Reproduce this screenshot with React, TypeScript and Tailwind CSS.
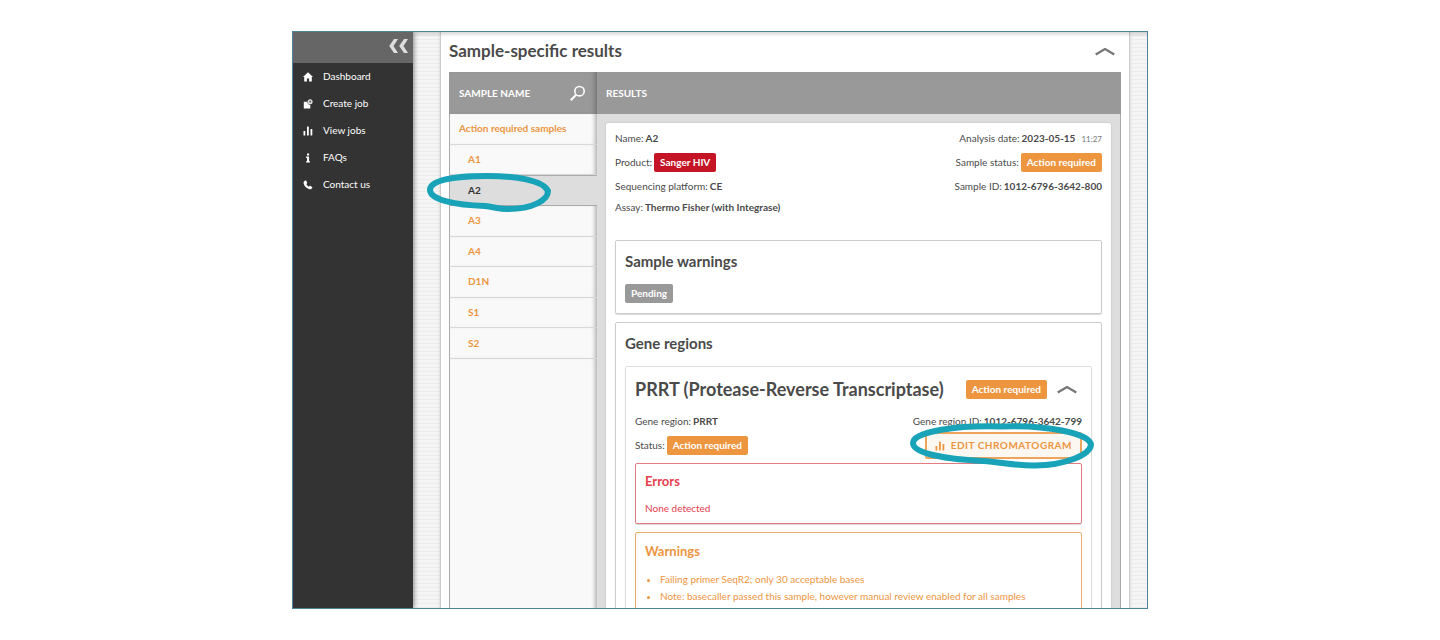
import React from 'react';

const navItems = [
  { label: 'Dashboard', icon: 'home' },
  { label: 'Create job', icon: 'create' },
  { label: 'View jobs', icon: 'bars' },
  { label: 'FAQs', icon: 'info' },
  { label: 'Contact us', icon: 'phone' },
];

const samples = ['A1', 'A2', 'A3', 'A4', 'D1N', 'S1', 'S2'];
const selected = 'A2';

const Bars: React.FC = () => (
  <svg width="10" height="10" viewBox="0 0 10 10" fill="currentColor" aria-hidden="true">
    <rect x="0.5" y="5" width="1.8" height="4.5" rx="0.5" />
    <rect x="4" y="0.5" width="1.8" height="9" rx="0.5" />
    <rect x="7.5" y="3" width="1.8" height="6.5" rx="0.5" />
  </svg>
);

const NavIcon: React.FC<{ name: string }> = ({ name }) => {
  if (name === 'bars') return <Bars />;
  return (
    <svg width="10" height="10" viewBox="0 0 10 10" fill="currentColor" aria-hidden="true">
      {name === 'home' && <path d="M5 0.300 0 5h1.200v4.500h2.700V6.500h2.200v3h2.700V5H10z" />}
      {name === 'create' && (
        <>
          <path d="M0.800 2.800h3.600a2.600 2.600 0 0 0 2.900 3v3.700H0.800z" />
          <path d="M7.100 0.200a2.500 2.500 0 1 0 0 5 2.500 2.500 0 0 0 0-5zm-.3 1.300h.6v.9h.9v.6h-.9v.9h-.6V3h-.9v-.6h.9z" fillRule="evenodd" opacity="0.85" />
        </>
      )}
      {name === 'info' && <path d="M4 0.500h2.100v2H4zM3.100 3.600h3v4.600h.9v1.300H3.100V8.200H4V4.900h-.9z" />}
      {name === 'phone' && (
        <path d="M2.200 0.600c.5-.3.9-.1 1.100.3l.8 1.500c.2.4.1.7-.2 1l-.6.5c.5 1.200 1.400 2.200 2.700 2.800l.6-.6c.3-.3.6-.3 1-.1l1.400.9c.4.3.5.7.2 1.100-.6 1-1.500 1.500-2.700 1.200C3.400 8.400 1.100 6 0.600 3.300c-.2-1.200.4-2.100 1.600-2.700z" />
      )}
    </svg>
  );
};

const Chevron: React.FC = () => (
  <svg width="20" height="9" viewBox="0 0 20 9" fill="none" stroke="#777" strokeWidth="2.2" aria-hidden="true">
    <path d="M0.700 7.500 10 2l9.300 5.500" strokeLinejoin="round" />
  </svg>
);

const Badge: React.FC<{ className: string; children: React.ReactNode }> = ({ className, children }) => (
  <span className={`inline-flex h-[19px] items-center rounded-[2px] px-[6px] font-bold text-white ${className}`}>
    {children}
  </span>
);

const Row: React.FC<{ label: string; tall?: boolean; children: React.ReactNode }> = ({ label, tall, children }) => (
  <div className={`flex items-center gap-[2px] ${tall ? 'h-[27px]' : 'h-[21px]'}`}>
    <span>{label}</span>
    {children}
  </div>
);

const box = 'rounded-[2px] border px-[9px] shadow-[0_1px_1px_rgba(0,0,0,0.15)]';

const App: React.FC = () => {
  return (
    <div className="h-screen bg-white py-[31px] font-['Lato',sans-serif] text-[10px] text-[#4a4a4a]">
      <div className="mx-auto flex h-full max-w-[856px] overflow-hidden border border-[#4f8599]">
        {/* Sidebar */}
        <aside className="z-10 w-[120px] shrink-0 bg-[#333] text-white shadow-[1px_0_5px_rgba(0,0,0,0.45)]">
          <div className="flex h-[31px] items-center justify-end bg-[#666] pr-1 pb-[3px]">
            <button type="button" aria-label="Collapse menu">
              <svg width="21" height="14" viewBox="0 0 21 14" fill="#ddd" aria-hidden="true">
                <path d="M6 0h4L5.500 7l4.500 7H6L1.200 7zM16 0h4l-4.500 7 4.500 7h-4l-4.800-7z" />
              </svg>
            </button>
          </div>
          <nav>
            {navItems.map((item) => (
              <a key={item.label} href="#" className="flex h-[27px] items-center gap-[10px] pl-[10px]">
                <NavIcon name={item.icon} />
                {item.label}
              </a>
            ))}
          </nav>
        </aside>

        {/* Main area on the ruled background */}
        <main className="relative flex min-w-0 flex-1 bg-[repeating-linear-gradient(to_bottom,#f5f5f5_0px,#f5f5f5_3px,#ececec_3px,#ececec_4px)] pr-[17px] pl-[27px]">
          <section className="min-w-0 flex-1 self-start border-x border-[#ccc] bg-white px-2 shadow-[0_0_3px_rgba(0,0,0,0.15)]">
            <header className="flex h-10 items-center justify-between pr-[6px] pb-[2px]">
              <h1 className="text-[17px] font-bold">Sample-specific results</h1>
              <button type="button" aria-label="Collapse sample results">
                <Chevron />
              </button>
            </header>

            <div className="flex">
              {/* Sample list */}
              <div className="flex w-[148px] shrink-0 flex-col bg-[#ddd]">
                <div className="flex h-[42px] items-center justify-between bg-[#999] pr-[11px] pl-[10px] font-bold text-white shadow-[inset_-5px_0_5px_-3px_rgba(0,0,0,0.25)]">
                  SAMPLE NAME
                  <button type="button" aria-label="Search samples">
                    <svg width="17" height="17" viewBox="0 0 17 17" fill="none" stroke="#fff" strokeWidth="1.6" aria-hidden="true">
                      <circle cx="10.500" cy="6.200" r="4.700" />
                      <path d="m7.200 9.800-5.400 5.400" strokeWidth="2" />
                    </svg>
                  </button>
                </div>
                <ul className="grid h-[245px] auto-rows-fr font-bold text-[#ec953f]">
                  <li className="flex items-center border-b border-l border-b-[#d8d8d8] border-l-[#aaa] bg-[#f9f9f9] pl-[9px] shadow-[inset_-5px_0_4px_-3px_rgba(0,0,0,0.3)]">
                    Action required samples
                  </li>
                  {samples.map((name) => (
                    <li
                      key={name}
                      className={
                        name === selected
                          ? 'relative flex border-y border-l border-[#aaa] bg-[#ddd] text-[#333]'
                          : 'flex border-b border-l border-b-[#d8d8d8] border-l-[#aaa] bg-[#f9f9f9] shadow-[inset_-5px_0_4px_-3px_rgba(0,0,0,0.3)]'
                      }
                    >
                      <button type="button" className="flex-1 pl-[18px] text-left font-bold">
                        {name}
                      </button>
                      {name === selected && (
                        <svg className="pointer-events-none absolute -top-[5px] -left-[25px] z-20" width="130" height="42" viewBox="0 0 130 42" fill="none" stroke="#18a3b8" strokeWidth="6" aria-hidden="true">
                          <path d="M62 5C25 5 5 10 5 19c0 10 26 15 55 16 9 1 14 3 23 3 25 0 40-9 40-18C118 9 90 5 62 5z" />
                        </svg>
                      )}
                    </li>
                  ))}
                </ul>
                <div className="flex-1 border-l border-[#aaa] bg-[#f9f9f9] shadow-[inset_-5px_0_4px_-3px_rgba(0,0,0,0.3)]" />
              </div>

              {/* Results */}
              <div className="min-w-0 flex-1 border-r border-[#aaa] bg-[#ddd]">
                <h2 className="-mr-px flex h-[42px] items-center bg-[#999] pl-[9px] font-bold text-white">RESULTS</h2>
                <div className="px-[9px] pt-[9px]">
                  <article className="rounded-t-[2px] bg-white px-[9px] pt-[5px] pb-3 shadow-[0_0_2px_rgba(0,0,0,0.2)]">
                    <div className="flex justify-between">
                      <div>
                        <Row label="Name:"><b>A2</b></Row>
                        <Row label="Product:" tall><Badge className="bg-[#c41425]">Sanger HIV</Badge></Row>
                        <Row label="Sequencing platform:"><b>CE</b></Row>
                        <Row label="Assay:"><b>Thermo Fisher (with Integrase)</b></Row>
                      </div>
                      <div className="flex flex-col items-end">
                        <Row label="Analysis date:">
                          <b>2023-05-15</b>
                          <time className="pl-1 text-[8px] text-[#777]">11:27</time>
                        </Row>
                        <Row label="Sample status:" tall><Badge className="bg-[#ed953f]">Action required</Badge></Row>
                        <Row label="Sample ID:"><b>1012-6796-3642-800</b></Row>
                      </div>
                    </div>

                    <section className={`mt-[22px] border-[#ccc] pb-[10px] ${box}`}>
                      <h3 className="flex h-[43px] items-center pb-[2px] text-[15px] font-bold">Sample warnings</h3>
                      <Badge className="bg-[#999]">Pending</Badge>
                    </section>

                    <section className={`mt-2 border-[#ccc] pb-[9px] ${box}`}>
                      <h3 className="flex h-[43px] items-center pb-[2px] text-[15px] font-bold">Gene regions</h3>
                      <div className={`border-[#ddd] pb-[9px] ${box}`}>
                        <header className="flex h-11 items-center gap-[10px] pr-[5px]">
                          <h4 className="flex-1 text-[18px] font-bold">PRRT (Protease-Reverse Transcriptase)</h4>
                          <Badge className="bg-[#ed953f]">Action required</Badge>
                          <button type="button" aria-label="Collapse gene region">
                            <Chevron />
                          </button>
                        </header>
                        <div className="mb-1 flex justify-between">
                          <div>
                            <Row label="Gene region:"><b>PRRT</b></Row>
                            <Row label="Status:" tall><Badge className="bg-[#ed953f]">Action required</Badge></Row>
                          </div>
                          <div className="flex flex-col items-end">
                            <Row label="Gene region ID:"><b>1012-6796-3642-799</b></Row>
                            <div className="relative">
                              <button type="button" className="flex h-[27px] items-center gap-[6px] rounded-[2px] border-2 border-[#eda45c] bg-[#fdf7f1] px-2 font-bold tracking-wider text-[#ec953f]">
                                <Bars />
                                EDIT CHROMATOGRAM
                              </button>
                              <svg className="pointer-events-none absolute -top-[11px] -right-[13px]" width="188" height="50" viewBox="0 0 188 50" fill="none" stroke="#18a3b8" strokeWidth="6" aria-hidden="true">
                                <path d="M95 5.500C52 4 6 10 6 22c0 10 30 16 70 18 18 1 34 5 52 4.500C158 44 184 34 184 23 180 12 140 4 95 5.500z" />
                              </svg>
                            </div>
                          </div>
                        </div>

                        <section className={`border-[#e27a82] pb-[7px] text-[#e5404d] ${box}`}>
                          <h5 className="flex h-9 items-center text-[13px] font-bold">Errors</h5>
                          <p className="leading-4">None detected</p>
                        </section>
                        <section className={`mt-2 border-[#eeac6b] pb-[9px] text-[#ec953f] ${box}`}>
                          <h5 className="flex h-[38px] items-center text-[13px] font-bold">Warnings</h5>
                          <ul className="list-disc pl-[15px] leading-[17px]">
                            <li>Failing primer SeqR2; only 30 acceptable bases</li>
                            <li>Note: basecaller passed this sample, however manual review enabled for all samples</li>
                          </ul>
                        </section>
                      </div>
                    </section>
                  </article>
                </div>
              </div>
            </div>
          </section>
          <div className="pointer-events-none absolute inset-x-0 top-0 h-[5px] bg-gradient-to-b from-black/15 to-transparent" />
        </main>
      </div>
    </div>
  );
};

export default App;
